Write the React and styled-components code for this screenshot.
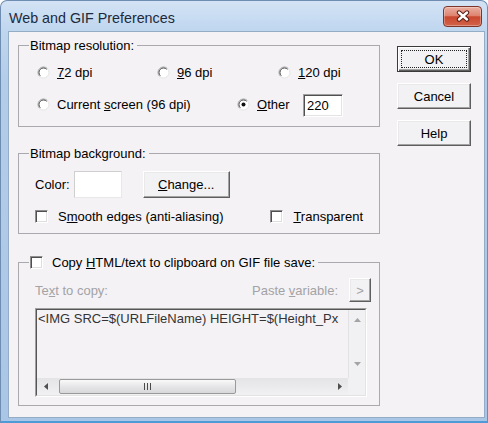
import React from 'react'
import styled, { createGlobalStyle, css } from 'styled-components'

const GlobalStyle = createGlobalStyle`
  html, body {
    margin: 0;
    padding: 0;
    background: #fff;
  }
  body {
    font-family: "Liberation Sans", Arial, sans-serif;
    font-size: 13px;
    color: #000;
  }
  * {
    box-sizing: border-box;
  }
`

const RadioMark = ({ checked }) => (
  <svg width="13" height="13" viewBox="0 0 13 13">
    <circle cx="6.5" cy="6.5" r="5.5" fill="#fff" />
    <path d="M2.6 10.4A5.5 5.5 0 0 1 10.4 2.6" fill="none" stroke="#a2a2a2" />
    <path d="M3.3 9.7A4.5 4.5 0 0 1 9.7 3.3" fill="none" stroke="#4c4c4c" />
    <path d="M10.4 2.6A5.5 5.5 0 0 1 2.6 10.4" fill="none" stroke="#e4e4e4" />
    {checked && <circle cx="6.5" cy="6.5" r="2" fill="#111" />}
  </svg>
)

const CloseGlyph = () => (
  <svg width="16" height="12" viewBox="0 0 16 12">
    <path d="M4 2.5L12 9.5M12 2.5L4 9.5" stroke="#5a1d14" strokeWidth="4.4" strokeLinecap="round" />
    <path d="M4 2.5L12 9.5M12 2.5L4 9.5" stroke="#fff" strokeWidth="2.4" strokeLinecap="round" />
  </svg>
)

const Arrow = ({ dir, color = '#4f4f4f' }) => {
  const shapes = {
    left: 'M4 0L0 3.5L4 7Z',
    right: 'M0 0L4 3.5L0 7Z',
    up: 'M0 4L3.5 0L7 4Z',
    down: 'M0 0L3.5 4L7 0Z',
  }
  const flat = dir === 'up' || dir === 'down'
  return (
    <svg width={flat ? 7 : 4} height={flat ? 4 : 7} viewBox={flat ? '0 0 7 4' : '0 0 4 7'}>
      <path d={shapes[dir]} fill={color} />
    </svg>
  )
}

const Grip = () => (
  <svg width="7" height="7" viewBox="0 0 7 7">
    <path d="M0.5 0V7M3.5 0V7M6.5 0V7" stroke="#4a4a4a" />
  </svg>
)

const Radio = ({ width, checked, children }) => (
  <Option $width={width}>
    <RadioMark checked={checked} />
    <span>{children}</span>
  </Option>
)

export default function App() {
  return (
    <>
      <GlobalStyle />
      <Window>
        <TitleBar>
          <Title>Web and GIF Preferences</Title>
          <CloseButton aria-label="Close">
            <CloseGlyph />
          </CloseButton>
        </TitleBar>

        <Client>
          <Main>
            <Group $pt={9} $pb={10}>
              <Legend>Bitmap resolution:</Legend>
              <Row $h={20} $pl={8}>
                <Radio width={120}><Key>7</Key>2 dpi</Radio>
                <Radio width={121}><Key>9</Key>6 dpi</Radio>
                <Radio><Key>1</Key>20 dpi</Radio>
              </Row>
              <Row $h={24} $pl={8} $mt={10}>
                <Radio width={200}>Current <Key>s</Key>creen (96 dpi)</Radio>
                <Radio width={66} checked><Key>O</Key>ther</Radio>
                <NumberField readOnly value="220" />
              </Row>
            </Group>

            <Group $mt={19} $pt={10} $pb={7} $pr={16}>
              <Legend>Bitmap background:</Legend>
              <Row $h={27} $pl={6}>
                <span>Color:</span>
                <Swatch />
                <Button $w={87} $h={27} $ml={21}><Key>C</Key>hange...</Button>
              </Row>
              <Row $h={20} $pl={6} $mt={8}>
                <Option $gap={10}>
                  <CheckBox />
                  <span>S<Key>m</Key>ooth edges (anti-aliasing)</span>
                </Option>
                <Option $gap={10} $push>
                  <CheckBox />
                  <span><Key>T</Key>ransparent</span>
                </Option>
              </Row>
            </Group>

            <Group $mt={21} $pt={8} $pb={8} $pr={8}>
              <Legend>
                <CheckBox />
                <span>Copy <Key>H</Key>TML/text to clipboard on GIF file save:</span>
              </Legend>
              <Row $h={24} $pl={6}>
                <Muted>Te<Key>x</Key>t to copy:</Muted>
                <Muted $push>Paste <Key>v</Key>ariable:</Muted>
                <Button $w={22} $h={24} $ml={11} $muted>&gt;</Button>
              </Row>
              <TextFrame>
                <TextBox>
                  <TextContent>&lt;IMG SRC=$(URLFileName) HEIGHT=$(Height_Px</TextContent>
                  <VScroll>
                    <ArrowCell $h={20}><Arrow dir="up" color="#a4a4a4" /></ArrowCell>
                    <ArrowCell $h={20}><Arrow dir="down" color="#a4a4a4" /></ArrowCell>
                  </VScroll>
                  <HScroll>
                    <ArrowCell $w={17}><Arrow dir="left" /></ArrowCell>
                    <Thumb><Grip /></Thumb>
                    <ArrowCell $w={17} $push><Arrow dir="right" /></ArrowCell>
                  </HScroll>
                  <Corner />
                </TextBox>
              </TextFrame>
            </Group>
          </Main>

          <Side>
            <Button $w={74} $h={26} $default>OK</Button>
            <Button $w={74} $h={26}>Cancel</Button>
            <Button $w={74} $h={26}>Help</Button>
          </Side>
        </Client>
      </Window>
    </>
  )
}

const Window = styled.div`
  width: 488px;
  height: 423px;
  display: flex;
  flex-direction: column;
  border: 1px solid #6f8db0;
  border-bottom: 2px solid #4e9ad6;
  border-radius: 7px 7px 0 0;
  background: linear-gradient(to bottom, #d3e3f5 0, #bfd6ef 30px, #b3cce8 80px, #aac6e6 100%);
`

const TitleBar = styled.div`
  height: 30px;
  flex-shrink: 0;
  display: flex;
  align-items: center;
  padding: 0 5px 0 8px;
`

const Title = styled.div`
  margin-top: 3px;
  font-size: 14.3px;
  color: #1c2a3b;
`

const CloseButton = styled.div`
  margin-left: auto;
  width: 39px;
  height: 21px;
  display: flex;
  align-items: center;
  justify-content: center;
  border: 1px solid #7d352a;
  border-radius: 4px;
  background: linear-gradient(to bottom, #eab0a2 0%, #de8470 45%, #c9472e 52%, #d2634a 100%);
  box-shadow: inset 0 0 0 1px rgba(255, 255, 255, 0.3);
`

const Client = styled.div`
  flex: 1;
  display: flex;
  margin: 0 2px 3px 7px;
  padding: 6px 0 0 9px;
  border: 1px solid #95acc7;
  background: #f4f2f5;
`

const Main = styled.div`
  width: 362px;
  display: flex;
  flex-direction: column;
`

const Side = styled.div`
  display: flex;
  flex-direction: column;
  gap: 11px;
  margin: 8px 0 0 17px;
`

const Group = styled.fieldset`
  width: 362px;
  min-width: 0;
  margin: ${({ $mt }) => $mt || 0}px 0 0;
  padding: ${({ $pt }) => $pt}px ${({ $pr }) => $pr || 10}px ${({ $pb }) => $pb}px 10px;
  border: 1px solid #aaa9ad;
`

const Legend = styled.legend`
  display: flex;
  align-items: center;
  gap: 9px;
  padding: 0 3px 0 1px;
  line-height: 15px;
`

const Row = styled.div`
  display: flex;
  align-items: center;
  height: ${({ $h }) => $h}px;
  margin-top: ${({ $mt }) => $mt || 0}px;
  padding-left: ${({ $pl }) => $pl || 0}px;
  line-height: 15px;
`

const Option = styled.label`
  display: inline-flex;
  align-items: center;
  flex-shrink: 0;
  gap: ${({ $gap }) => $gap ?? 7}px;
  width: ${({ $width }) => ($width ? `${$width}px` : 'auto')};
  margin-left: ${({ $push }) => ($push ? 'auto' : '0')};
`

const Key = styled.span`
  text-decoration: underline;
  text-underline-offset: 1px;
`

const Muted = styled.span`
  color: #a3a2a6;
  margin-left: ${({ $push }) => ($push ? 'auto' : '0')};
`

const CheckBox = styled.span`
  width: 13px;
  height: 13px;
  flex-shrink: 0;
  background: #fff;
  border: 1px solid;
  border-color: #8f8f8f #fff #fff #8f8f8f;
  box-shadow: inset 1px 1px 0 #4f4f4f, inset -1px -1px 0 #dedede;
`

const NumberField = styled.input`
  width: 40px;
  height: 23px;
  margin: 2px 0 0;
  padding: 1px 0 0 3px;
  font: inherit;
  color: #000;
  background: #fff;
  border: 1px solid;
  border-color: #a0a0a0 #fff #fff #a0a0a0;
  box-shadow: inset 1px 1px 0 #505050, inset -1px -1px 0 #e3e3e3;
  outline: none;
`

const Swatch = styled.div`
  width: 48px;
  height: 27px;
  margin-left: 4px;
  background: #fff;
  border: 1px solid;
  border-color: #cfcfcf #e8e8e8 #e8e8e8 #cfcfcf;
`

const Button = styled.button`
  position: relative;
  width: ${({ $w }) => $w}px;
  height: ${({ $h }) => $h}px;
  margin-left: ${({ $ml }) => $ml || 0}px;
  padding: 0;
  flex-shrink: 0;
  font: inherit;
  line-height: 15px;
  color: ${({ $muted }) => ($muted ? '#a3a2a6' : '#000')};
  background: #f2f1f4;
  border: 1px solid;
  border-color: #fff #5e5e5e #5e5e5e #fff;
  box-shadow: inset -1px -1px 0 #a3a3a3, inset 1px 1px 0 #e9e9e9;

  ${({ $default }) =>
    $default &&
    css`
      border-color: #3a3a3a;
      box-shadow: inset 1px 1px 0 #fff, inset -1px -1px 0 #5e5e5e, inset -2px -2px 0 #a3a3a3;

      &::after {
        content: '';
        position: absolute;
        inset: 3px;
        border: 1px dotted #222;
      }
    `}
`

const TextFrame = styled.div`
  margin: 6px 4px 0 6px;
  height: 89px;
  border: 1px solid;
  border-color: #a0a0a0 #fff #fff #a0a0a0;
`

const TextBox = styled.div`
  height: 100%;
  display: grid;
  grid-template-columns: 1fr 17px;
  grid-template-rows: 1fr 17px;
  border: 1px solid;
  border-color: #555 #e3e3e3 #e3e3e3 #555;
`

const TextContent = styled.div`
  overflow: hidden;
  white-space: nowrap;
  padding: 1px 0 0 1px;
  line-height: 15px;
  color: #343434;
`

const VScroll = styled.div`
  display: flex;
  flex-direction: column;
  justify-content: space-between;
  padding-bottom: 4px;
  background: #f1f0f2;
  border-left: 1px solid #e2e2e4;
`

const HScroll = styled.div`
  display: flex;
  align-items: center;
  background: linear-gradient(to bottom, #e4e4e6, #f1f1f3);
`

const ArrowCell = styled.div`
  display: flex;
  align-items: center;
  justify-content: center;
  flex-shrink: 0;
  width: ${({ $w }) => ($w ? `${$w}px` : 'auto')};
  height: ${({ $h }) => ($h ? `${$h}px` : '100%')};
  margin-left: ${({ $push }) => ($push ? 'auto' : '0')};
`

const Thumb = styled.div`
  width: 177px;
  height: 15px;
  margin-left: 5px;
  display: flex;
  align-items: center;
  justify-content: center;
  border: 1px solid #999;
  border-radius: 2px;
  background: linear-gradient(to bottom, #f9f9f9, #e6e6e8 50%, #d8d8da);
`

const Corner = styled.div`
  background: #f1f0f2;
`
